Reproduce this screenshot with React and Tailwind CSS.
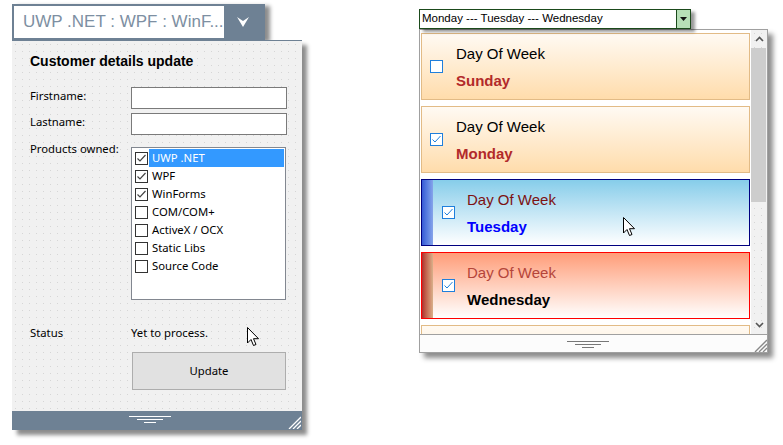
const products = [
  { label: 'UWP .NET', checked: true, selected: true },
  { label: 'WPF', checked: true },
  { label: 'WinForms', checked: true },
  { label: 'COM/COM+', checked: false },
  { label: 'ActiveX / OCX', checked: false },
  { label: 'Static Libs', checked: false },
  { label: 'Source Code', checked: false },
];

const dayStyles = {
  peach: {
    box: 'border-[#e2bb86] bg-gradient-to-b from-[#fffaf3] to-[#ffdcab]',
    bar: null,
    caption: 'text-black',
    day: 'text-[#b22a2a]',
  },
  blue: {
    box: 'border-[#000080] bg-gradient-to-b from-[#86cdea] to-white',
    bar: 'bg-gradient-to-r from-[#3659d6] to-[#86a4ea]',
    caption: 'text-[#7d1212]',
    day: 'text-[#0000ff]',
  },
  red: {
    box: 'border-[#ff0000] bg-gradient-to-b from-[#ff9c78] to-white',
    bar: 'bg-gradient-to-r from-[#b02c2c] to-[#d9b08a]',
    caption: 'text-[#b5453a]',
    day: 'text-black',
  },
};

// last one is scrolled out of view, only its top border shows
const days = [
  { day: 'Sunday', checked: false, look: 'peach' },
  { day: 'Monday', checked: true, look: 'peach' },
  { day: 'Tuesday', checked: true, look: 'blue' },
  { day: 'Wednesday', checked: true, look: 'red' },
  { day: null, checked: false, look: 'peach' },
];

const dots = 'bg-[#f1f1f1] bg-[radial-gradient(circle,#d6d6d6_0.7px,transparent_0.9px)] bg-[length:7px_7px]';

const Cursor = ({ className }) => (
  <svg className={className} width="13" height="20" viewBox="0 0 13 20">
    <path d="M0.5 0.5 L0.5 16 L4 12.5 L6.5 18.5 L9 17.5 L6.5 11.7 L11.5 11.7 Z" fill="white" stroke="black" strokeWidth="1" strokeLinejoin="round" />
  </svg>
);

const ResizeGrip = ({ color }) => (
  <svg width="14" height="14" viewBox="0 0 14 14">
    {[2, 6, 10].map((o) => (
      <line key={o} x1="14" y1={o} x2={o} y2="14" stroke={color} strokeWidth="1.3" />
    ))}
  </svg>
);

const GripLines = ({ color }) => (
  <svg width="42" height="9" viewBox="0 0 42 9">
    <line x1="0" y1="1.5" x2="42" y2="1.5" stroke={color} strokeWidth="1" />
    <line x1="8" y1="4.5" x2="34" y2="4.5" stroke={color} strokeWidth="1" />
    <line x1="15" y1="7.5" x2="27" y2="7.5" stroke={color} strokeWidth="1" />
  </svg>
);

const ProductCheck = ({ checked }) => (
  <span className="w-[13px] h-[13px] border border-[#333] bg-white flex items-center justify-center shrink-0">
    {checked && (
      <svg width="11" height="11" viewBox="0 0 11 11">
        <polyline points="1.5,5.5 4,8 9.5,2" fill="none" stroke="#444" strokeWidth="1.2" />
      </svg>
    )}
  </span>
);

const DayCheck = ({ checked }) => (
  <span className="w-[13px] h-[13px] border border-[#1f7fdc] bg-white flex items-center justify-center shrink-0">
    {checked && (
      <svg width="11" height="11" viewBox="0 0 11 11">
        <polyline points="1.5,5.5 4,8 9.5,2" fill="none" stroke="#1f7fdc" strokeWidth="1" />
      </svg>
    )}
  </span>
);

const CustomerWindow = () => (
  <div className="ml-[12px] mt-[4px] flex flex-col items-start">
    {/* Combo header */}
    <div className="w-[253px] h-[36px] bg-[#6e8194] p-[2px] flex shadow-[5px_2px_4px_rgba(0,0,0,0.45)]">
      <div className="flex-1 bg-white flex items-center pl-[9px] text-[17px] text-[#7d8fa2] font-['Liberation_Sans',sans-serif] whitespace-nowrap">
        UWP .NET : WPF : WinF...
      </div>
      <div className="w-[50px] flex items-center justify-center">
        <svg width="14" height="12" viewBox="0 0 14 12">
          <path d="M1 1 L7 5 L13 1 L7 11 Z" fill="white" />
        </svg>
      </div>
    </div>

    {/* Panel */}
    <div className="w-[290px] flex flex-col shadow-[5px_5px_4px_rgba(0,0,0,0.45)] font-['Noto_Sans',sans-serif] text-[11.3px] text-black">
      <div className={`h-[371px] border-t border-[#6e8194] pl-[18px] pt-[12px] ${dots}`}>
        <h1 className="text-[14px] leading-[17px] font-bold font-['Liberation_Sans',sans-serif]">Customer details update</h1>

        <div className="flex items-start mt-[17px]">
          <span className="w-[101px] leading-[16px] pt-[1px]">Firstname:</span>
          <div className="w-[156px] h-[22px] bg-white border border-[#7a7a7a]" />
        </div>
        <div className="flex items-start mt-[4px]">
          <span className="w-[101px] leading-[16px] pt-[1px]">Lastname:</span>
          <div className="w-[156px] h-[22px] bg-white border border-[#7a7a7a]" />
        </div>

        <div className="flex items-start mt-[12px]">
          <span className="w-[101px] leading-[16px] -mt-[6px]">Products owned:</span>
          <div className="w-[155px] h-[153px] bg-white border border-[#828790] pt-[1px] pl-[2px] pr-[1px]">
            {products.map((p) => (
              <div key={p.label} className="flex items-center h-[18px]">
                <span className="ml-[1px]">
                  <ProductCheck checked={p.checked} />
                </span>
                <span
                  className={`ml-[1px] flex-1 h-full flex items-center pl-[3px] leading-[16px] ${
                    p.selected ? 'bg-[#3399ff] text-white' : ''
                  }`}
                >
                  {p.label}
                </span>
              </div>
            ))}
          </div>
        </div>

        <div className="flex items-start mt-[25px] leading-[16px]">
          <span className="w-[101px]">Status</span>
          <span>Yet to process.</span>
        </div>

        <button className="ml-[102px] mt-[11px] w-[154px] h-[38px] bg-[#e1e1e1] border border-[#adadad] text-[11.3px] font-['Noto_Sans',sans-serif]">
          Update
        </button>
      </div>
      <div className="relative h-[19px] bg-[#6e8194] flex items-start justify-center pt-[4px] pr-[14px]">
        <GripLines color="white" />
        <div className="absolute right-[1px] bottom-[1px]">
          <ResizeGrip color="white" />
        </div>
      </div>
    </div>
  </div>
);

const DayItem = ({ item }) => {
  const s = dayStyles[item.look];
  return (
    <div className={`flex items-stretch h-[67px] border shrink-0 ${s.box}`}>
      {s.bar && <div className={`w-[11px] ${s.bar}`} />}
      {item.day && (
        <>
          <div className={`flex items-center ${s.bar ? 'ml-[9px]' : 'ml-[8px]'}`}>
            <DayCheck checked={item.checked} />
          </div>
          <div className={`flex flex-col justify-center pt-[2px] font-['Liberation_Sans',sans-serif] text-[15px] leading-[18px] ${s.bar ? 'ml-[12px]' : 'ml-[13px]'}`}>
            <span className={s.caption}>Day Of Week</span>
            <span className={`mt-[9px] font-bold ${s.day}`}>{item.day}</span>
          </div>
        </>
      )}
    </div>
  );
};

const DaysWindow = () => (
  <div className="ml-[117px] mt-[9px] flex flex-col items-start">
    {/* Combo */}
    <div className="w-[272px] h-[20px] border border-[#1b4a1b] bg-white flex shadow-[4px_3px_3px_rgba(0,0,0,0.4)] relative z-10">
      <div className="flex-1 flex items-center pl-[2px] text-[11.5px] text-black font-['Liberation_Sans',sans-serif] whitespace-nowrap">
        Monday --- Tuesday --- Wednesday
      </div>
      <div className="w-[14px] bg-[#b7dfb7] border-l border-[#1b4a1b] flex items-center justify-center">
        <svg width="7" height="4" viewBox="0 0 7 4">
          <path d="M0 0 L7 0 L3.5 4 Z" fill="#111" />
        </svg>
      </div>
    </div>

    {/* Drop panel */}
    <div className="w-[349px] h-[324px] border border-[#a0a0a0] bg-white flex flex-col shadow-[5px_5px_5px_rgba(0,0,0,0.45)]">
      <div className="flex h-[304px]">
        <div className="w-[331px] overflow-hidden pt-[3px] px-[1px] flex flex-col gap-[6px]">
          {days.map((d, i) => (
            <DayItem key={i} item={d} />
          ))}
        </div>
        <div className={`w-[16px] flex flex-col ${dots}`}>
          <div className="h-[18px] flex items-center justify-center">
            <svg width="9" height="6" viewBox="0 0 9 6">
              <polyline points="1,5 4.5,1.5 8,5" fill="none" stroke="#555" strokeWidth="1.6" />
            </svg>
          </div>
          <div className="h-[154px] bg-[#cdcdcd] mr-[1px]" />
          <div className="flex-1" />
          <div className="h-[18px] flex items-center justify-center">
            <svg width="9" height="6" viewBox="0 0 9 6">
              <polyline points="1,1 4.5,4.5 8,1" fill="none" stroke="#555" strokeWidth="1.6" />
            </svg>
          </div>
        </div>
      </div>
      <div className="relative flex-1 border-t border-[#a0a0a0] bg-[#fcfcfc] flex items-start justify-center pt-[5px] pr-[12px]">
        <GripLines color="#777" />
        <div className="absolute right-0 bottom-0">
          <ResizeGrip color="#888" />
        </div>
      </div>
    </div>
  </div>
);

export default function App() {
  return (
    <div className="relative w-[783px] h-[445px] bg-white flex items-start overflow-hidden">
      <CustomerWindow />
      <DaysWindow />
      <Cursor className="absolute left-[247px] top-[327px]" />
      <Cursor className="absolute left-[623px] top-[217px]" />
    </div>
  );
}
